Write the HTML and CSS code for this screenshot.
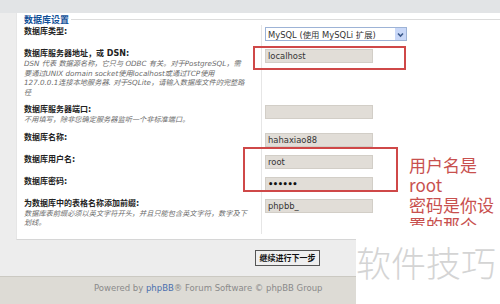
FILE: index.html
```html
<!DOCTYPE html>
<html lang="zh-CN">
<head>
  <meta charset="UTF-8">
  <title>phpBB 安装 - 数据库设置</title>
  <link rel="stylesheet" href="styles.css">
</head>
<body>
  <div class="topbar"></div>

  <div class="content">
    <div class="fieldset">
      <div class="legend"><span>数据库设置</span></div>

      <div class="row">
        <div class="dt"><label>数据库类型:</label></div>
        <div class="dd">
          <div class="select">
            <span>MySQL (使用 MySQLi 扩展)</span>
            <span class="arrow">
              <svg width="11" height="11" viewBox="0 0 11 11"><path d="M3 4.5 L5.5 7 L8 4.5" fill="none" stroke="#3d5a8a" stroke-width="1.6"/></svg>
            </span>
          </div>
        </div>
      </div>

      <div class="row">
        <div class="dt">
          <label>数据库服务器地址，或 DSN:</label>
          <span class="desc">DSN 代表 数据源名称，它只与 ODBC 有关。对于PostgreSQL，需<br>要通过UNIX domain socket使用localhost或通过TCP使用<br>127.0.0.1连接本地服务器. 对于SQLite，请输入数据库文件的完整路<br>径</span>
        </div>
        <div class="dd"><div class="input">localhost</div></div>
      </div>

      <div class="row">
        <div class="dt">
          <label>数据库服务器端口:</label>
          <span class="desc">不用填写，除非您确定服务器监听一个非标准端口。</span>
        </div>
        <div class="dd"><div class="input"></div></div>
      </div>

      <div class="row">
        <div class="dt"><label>数据库名称:</label></div>
        <div class="dd"><div class="input">hahaxiao88</div></div>
      </div>

      <div class="row">
        <div class="dt"><label>数据库用户名:</label></div>
        <div class="dd"><div class="input">root</div></div>
      </div>

      <div class="row">
        <div class="dt"><label>数据库密码:</label></div>
        <div class="dd"><div class="input dots">••••••</div></div>
      </div>

      <div class="row">
        <div class="dt">
          <label>为数据库中的表格名称添加前缀:</label>
          <span class="desc">数据库表前缀必须以英文字符开头，并且只能包含英文字符，数字及下<br>划线。</span>
        </div>
        <div class="dd"><div class="input">phpbb_</div></div>
      </div>
    </div>

    <div class="submit">
      <button>继续进行下一步</button>
    </div>
  </div>

  <div class="footer">
    Powered by <a href="#">phpBB</a>® Forum Software © phpBB Group
  </div>

  <!-- annotations pasted over the screenshot -->
  <div class="mark mark-host"></div>
  <div class="mark mark-user"></div>
  <div class="note">用户名是<br>root<br>密码是你设<br>置的那个</div>
  <div class="watermark">软件技巧</div>
</body>
</html>
```

FILE: styles.css
```css
body {
  margin: 0;
  background: #ededed;
  font-family: "DejaVu Sans", "Noto Sans CJK SC", sans-serif;
  color: #222;
  position: relative;
  height: 304px;
  overflow: hidden;
}
.topbar {
  height: 13px;
  background: #e2e4e6;
}
.content {
  padding-left: 16px;
}
.fieldset {
  background: #fff;
  border-left: 1px solid #e6e6e6;
  border-bottom: 1px solid #d6d6d6;
  padding-bottom: 5px;
}
.legend {
  display: flex;
  align-items: center;
  height: 12px;
  padding-left: 7px;
  font-size: 9px;
  font-weight: bold;
  color: #115098;
}
.legend::after {
  content: "";
  flex: 1;
  height: 1px;
  background: #dcdcdc;
  margin-left: 2px;
}
.row {
  display: flex;
}
.dt {
  width: 244px;
  box-sizing: border-box;
  padding: 2px 0 6px 7px;
  overflow: hidden;
  white-space: nowrap;
}
.dt label {
  display: block;
  font-size: 8px;
  line-height: 10px;
  font-weight: bold;
  color: #222;
}
.desc {
  display: block;
  font-size: 7.2px;
  line-height: 9.5px;
  font-style: italic;
  color: #6b6b6b;
}
.dd {
  border-left: 1px solid #e6e6e6;
  padding: 2px 0 6px 3px;
}
.select {
  width: 142px;
  height: 14px;
  box-sizing: border-box;
  border: 1px solid #9db3d6;
  background: #fff;
  display: flex;
  align-items: center;
  justify-content: space-between;
  font-size: 8.4px;
  color: #333;
  padding-left: 2px;
}
.arrow {
  width: 11px;
  height: 12px;
  background: #c9d8f8;
  display: flex;
  align-items: center;
  justify-content: center;
}
.input {
  width: 108px;
  height: 14px;
  box-sizing: border-box;
  background: #e1ddd7;
  border: 1px solid #d2cec7;
  font-size: 8.4px;
  line-height: 12px;
  padding-left: 2px;
  color: #333;
}
.input.dots {
  font-weight: bold;
  color: #111;
  letter-spacing: -0.5px;
}
.submit {
  padding: 10px 0 10px 239px;
}
.submit button {
  display: block;
  width: 65px;
  height: 16px;
  padding: 0;
  background: #efefef;
  border: 1px solid #555;
  font-family: "Noto Sans CJK SC", sans-serif;
  font-size: 8px;
  font-weight: bold;
  color: #111;
}
.footer {
  height: 30px;
  box-sizing: border-box;
  border-top: 1px solid #cbc9c2;
  background: #dddbd5;
  padding: 6px 0 0 94px;
  font-size: 8.5px;
  line-height: 11px;
  color: #8a8a8a;
}
.footer a {
  color: #4a6fae;
  text-decoration: none;
}
.mark {
  position: absolute;
  border: 2px solid #cf4848;
}
.mark-host {
  left: 253px;
  top: 46px;
  width: 149px;
  height: 20px;
}
.mark-user {
  left: 243px;
  top: 147px;
  width: 151px;
  height: 41px;
}
.note {
  position: absolute;
  left: 409px;
  top: 151px;
  width: 91px;
  height: 71px;
  padding-top: 4px;
  overflow: hidden;
  font-family: "Noto Sans CJK SC", sans-serif;
  font-size: 17px;
  line-height: 20px;
  color: #c8504e;
  white-space: nowrap;
}
.watermark {
  position: absolute;
  left: 356px;
  top: 232px;
  width: 144px;
  height: 72px;
  background: #fff;
  padding: 8px 0 0 0;
  box-sizing: border-box;
  font-family: "Noto Sans CJK SC", sans-serif;
  font-size: 35px;
  line-height: 44px;
  font-weight: 300;
  color: #d4d4d4;
}
```
